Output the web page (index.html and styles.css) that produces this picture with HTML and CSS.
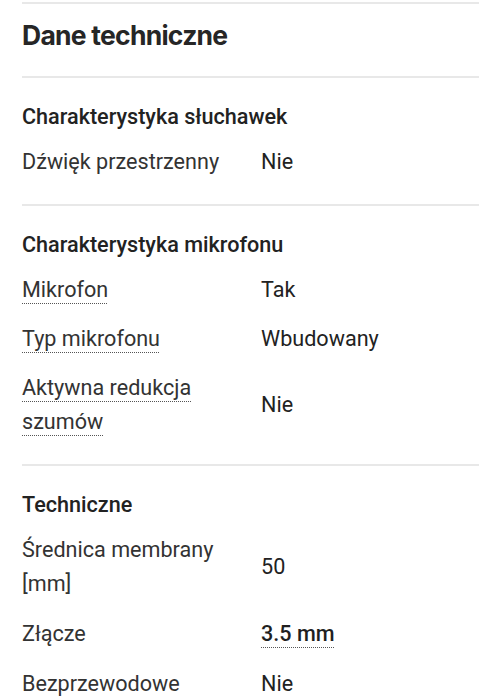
FILE: index.html
```html
<!DOCTYPE html>
<html lang="pl">
<head>
<meta charset="utf-8">
<title>Dane techniczne</title>
<link rel="stylesheet" href="styles.css">
</head>
<body>
<div class="page">
  <header class="head">
    <h1 class="title">Dane techniczne</h1>
  </header>

  <section class="group">
    <h2 class="group-title">Charakterystyka słuchawek</h2>
    <dl class="rows">
      <div class="row"><dt class="label">Dźwięk przestrzenny</dt><dd class="value">Nie</dd></div>
    </dl>
  </section>

  <section class="group">
    <h2 class="group-title">Charakterystyka mikrofonu</h2>
    <dl class="rows">
      <div class="row"><dt class="label"><span class="hint">Mikrofon</span></dt><dd class="value">Tak</dd></div>
      <div class="row"><dt class="label"><span class="hint">Typ mikrofonu</span></dt><dd class="value">Wbudowany</dd></div>
      <div class="row"><dt class="label"><span class="hint">Aktywna redukcja szumów</span></dt><dd class="value">Nie</dd></div>
    </dl>
  </section>

  <section class="group">
    <h2 class="group-title">Techniczne</h2>
    <dl class="rows rows-loose">
      <div class="row"><dt class="label">Średnica membrany [mm]</dt><dd class="value">50</dd></div>
      <div class="row"><dt class="label">Złącze</dt><dd class="value"><span class="hint link">3.5 mm</span></dd></div>
      <div class="row"><dt class="label">Bezprzewodowe</dt><dd class="value">Nie</dd></div>
    </dl>
  </section>
</div>
</body>
</html>
```

FILE: styles.css
```css
html, body {
  margin: 0;
  padding: 0;
  background: #ffffff;
}

body {
  font-family: Roboto, "Noto Sans", Arial, sans-serif;
  color: #222222;
  overflow: hidden;
}

.page {
  padding: 2px 0 0 22px;
}

.head {
  border-top: 2px solid #e8e8e8;
  padding: 13px 0 23px;
}

.title {
  margin: 0;
  font-family: Inter, "Noto Sans", sans-serif;
  font-weight: 700;
  font-size: 26.5px;
  line-height: 36px;
  letter-spacing: -0.75px;
  color: #262626;
}

.group {
  border-top: 2px solid #e8e8e8;
  padding: 22px 0 25px;
}

.group-title {
  margin: 0 0 11px;
  font-size: 21.6px;
  font-weight: 500;
  line-height: 34px;
  color: #222222;
}

.rows {
  margin: 0;
  display: flex;
  flex-direction: column;
  gap: 15px;
}

.rows-loose {
  gap: 16px;
}

.row {
  display: grid;
  grid-template-columns: 223px 1fr;
  column-gap: 16px;
  align-items: center;
}

.label {
  margin: 0;
  font-size: 21.6px;
  line-height: 34px;
  color: #333333;
}

.value {
  margin: 0;
  font-size: 21.6px;
  line-height: 34px;
  color: #222222;
}

.hint {
  text-decoration: underline dotted #555555;
  text-decoration-thickness: 1px;
  text-underline-offset: 6px;
}

.link {
  font-weight: 500;
  color: #1f1f1f;
}
```
